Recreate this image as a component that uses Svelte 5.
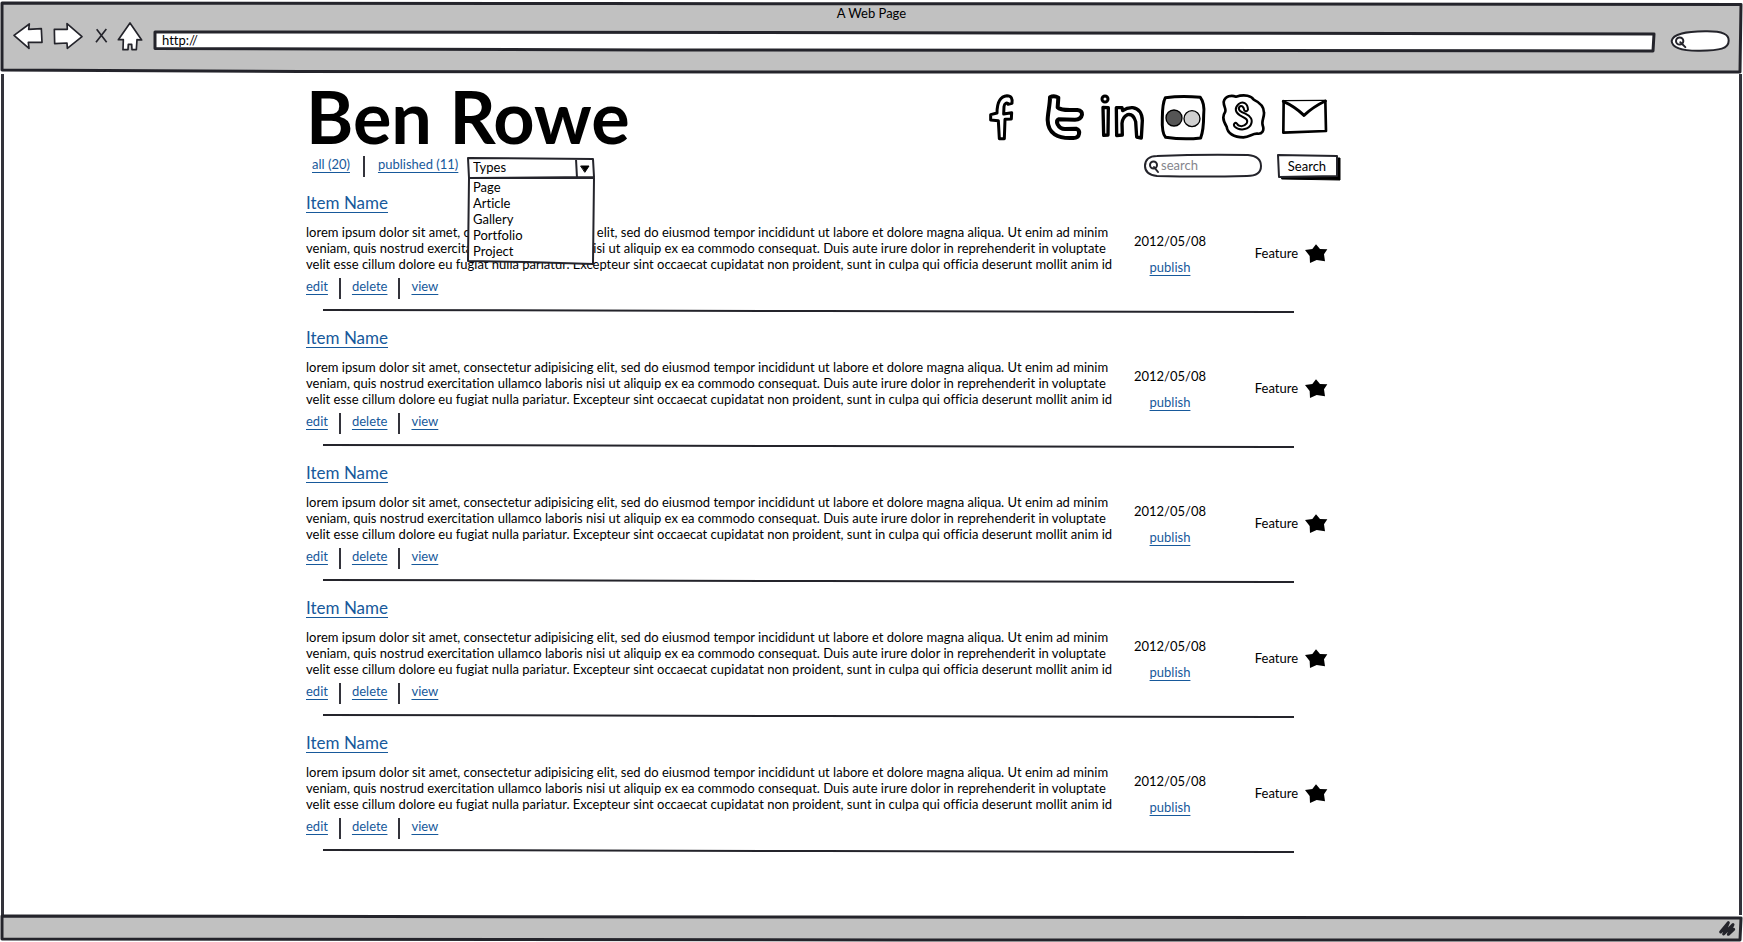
<script>
  const types = ['Page', 'Article', 'Gallery', 'Portfolio', 'Project'];
  const items = [1, 2, 3, 4, 5].map((id) => ({ id, name: 'Item Name', date: '2012/05/08' }));
  const lines = [
    'lorem ipsum dolor sit amet, consectetur adipisicing elit, sed do eiusmod tempor incididunt ut labore et dolore magna aliqua. Ut enim ad minim',
    'veniam, quis nostrud exercitation ullamco laboris nisi ut aliquip ex ea commodo consequat. Duis aute irure dolor in reprehenderit in voluptate',
    'velit esse cillum dolore eu fugiat nulla pariatur. Excepteur sint occaecat cupidatat non proident, sunt in culpa qui officia deserunt mollit anim id'
  ];
</script>

<div class="browser">
  <header class="chrome">
    <svg class="sketch" viewBox="0 0 1743 74" preserveAspectRatio="none" aria-hidden="true">
      <path class="bar" d="M2 3 L600 3.500 L1741 4.500 L1740 72 L900 72 L300 71.500 L2 70 Z" />
    </svg>
    <p class="window-title">A Web Page</p>
    <div class="tools">
      <button class="tool back" aria-label="Back">
        <svg viewBox="36 64 96 90" width="32" height="30"><path d="M42 107 L88 73 L86 89 L124 87 L126 128 L85 128 L87 146 Z" /></svg>
      </button>
      <button class="tool forward" aria-label="Forward">
        <svg viewBox="156 64 96 90" width="32" height="30"><path d="M163 89 L202 89 L201 72 L246 111 L202 146 L201 130 L164 132 Z" /></svg>
      </button>
      <button class="tool stop" aria-label="Stop">
        <svg viewBox="282 82 45 54" width="15" height="18"><path d="M290 89 L320 128 M319 88 L288 128" /></svg>
      </button>
      <button class="tool home" aria-label="Home">
        <svg viewBox="351 64 78 90" width="26" height="30"><path d="M390 70 L425 121 L411 120 L409 150 L396 150 L395 134 L385 134 L384 150 L369 150 L370 120 L355 120 Z" /></svg>
      </button>
      <div class="url">
        <svg class="sketch" viewBox="0 0 1503 22" preserveAspectRatio="none" aria-hidden="true">
          <path d="M2 2 L600 2.500 L1501 4 L1500 21 L500 20 L2 18.500 Z" />
        </svg>
        <input aria-label="Address" value="http://" />
      </div>
      <div class="pill">
        <svg class="sketch" viewBox="680 88 180 68" preserveAspectRatio="none" aria-hidden="true">
          <path d="M685 122 C688 98 730 93 785 92 C840 91 857 102 856 121 C856 146 830 151 770 152 C705 153 686 140 685 122 Z" />
          <circle cx="709" cy="122" r="11" /><path d="M711 126 L726 141" />
        </svg>
        <input aria-label="Web search" />
      </div>
    </div>
  </header>

  <main>
    <div class="page">
      <div class="masthead">
        <h1>Ben Rowe</h1>
        <div class="social">
          <a href="#facebook" aria-label="Facebook"><svg viewBox="54 36 132 150" width="44" height="50"><path d="M91 176 L88 122 L65 120 L65 104 L84 99 C84 68 92 49 114 47 C127 47 131 56 129 70 L117 73 C115 65 106 70 105 80 L104 102 L128 98 L127 117 L108 118 L106 176 Z" stroke-width="9" /></svg></a>
          <a href="#twitter" aria-label="Twitter"><svg viewBox="222 36 126 150" width="42" height="50"><path d="M240 52 Q252 45 265 53 L263 82 Q270 90 300 90 L322 90 Q337 92 336 104 Q333 119 315 119 L266 118 Q258 122 263 133 Q270 147 285 147 L318 146 Q330 150 327 162 Q325 174 310 174 C262 177 234 160 233 120 C233 100 240 75 240 52 Z" stroke-width="12" /></svg></a>
          <a href="#linkedin" aria-label="LinkedIn"><svg viewBox="393 36 141 150" width="47" height="50"><circle cx="411" cy="57" r="9" stroke-width="9" /><path d="M405 82 L421 83 L420 165 L407 166 Z M445 83 L462 83 L464 92 Q478 82 494 83 Q522 87 523 122 L520 174 L506 171 L503 125 Q496 100 478 104 Q463 112 462 130 L463 165 L446 167 Z" stroke-width="10" /></svg></a>
          <a href="#flickr" aria-label="Flickr"><svg viewBox="30 36 144 150" width="48" height="50"><path d="M49 53 Q100 46 154 52 Q168 70 164 105 Q164 150 155 174 Q105 180 50 172 Q38 160 40 115 Q40 70 49 53 Z" stroke-width="9" /><circle cx="75" cy="114" r="24" fill="#555" stroke-width="4" /><circle cx="129" cy="116" r="24" fill="#d0d0d0" stroke-width="4" /></svg></a>
          <a href="#skype" aria-label="Skype"><svg viewBox="210 36 141 150" width="47" height="50"><path d="M221 66 C225 47 245 45 258 50 C285 42 305 48 311 59 C326 66 342 78 342 98 C343 112 334 122 338 136 C344 152 336 163 322 161 C308 160 300 170 280 172 C252 172 232 160 230 140 C222 128 216 110 225 97 C230 88 221 80 221 66 Z" stroke-width="8" /><path d="M294 89 C293 69 278 63 266 72 C252 84 256 98 270 106 C282 113 297 117 290 130 C280 143 264 139 261 131 C256 126 248 131 254 140 C264 151 289 152 301 137 C311 120 302 108 286 101 C271 95 263 90 268 81 C274 74 281 80 283 91 Q290 98 294 89 Z" stroke-width="6" /></svg></a>
          <a href="#mail" aria-label="Email"><svg viewBox="390 36 147 150" width="49" height="50"><path d="M401 64 L526 63 L528 153 L400 158 Z" stroke-width="8" /><path d="M400 64 Q435 80 462 106 Q490 80 526 63" stroke-width="9" /></svg></a>
        </div>
      </div>

      <div class="toolbar">
        <nav aria-label="Filters">
          <a href="#all">all (20)</a>
          <i class="divider"></i>
          <a href="#published">published (11)</a>
        </nav>
        <div class="types">
          <svg class="sketch" viewBox="0 0 128 22" preserveAspectRatio="none" aria-hidden="true">
            <path d="M1 1 L126 2 L127 20 L2 21 Z M109 2 L110 21" />
            <path class="solid" d="M114 9 L122 9 L118 15 Z" />
          </svg>
          <select aria-label="Types">
            <option>Types</option>
            {#each types as type}<option>{type}</option>{/each}
          </select>
          <div class="menu">
            <svg class="sketch" viewBox="0 0 128 87" preserveAspectRatio="none" aria-hidden="true">
              <path d="M2 0 L1 83 L60 84 L126 86 L127 0 Z" />
            </svg>
            <ul>
              {#each types as type}<li><button>{type}</button></li>{/each}
            </ul>
          </div>
        </div>
        <form class="finder" onsubmit={(e) => e.preventDefault()}>
          <div class="field">
            <svg class="sketch" viewBox="0 0 120 24" preserveAspectRatio="none" aria-hidden="true">
              <path d="M14 2 Q60 0 105 1 C115 2 118 7 118 12 C118 19 112 22 104 22 Q60 23 14 22 C5 21 2 17 2 12 C2 6 6 2 14 2 Z" />
              <circle cx="10.500" cy="11" r="3.500" /><path d="M11 13 L15 18" />
            </svg>
            <input aria-label="Search" placeholder="search" />
          </div>
          <button class="go">
            <svg class="sketch" viewBox="0 0 64 27" preserveAspectRatio="none" aria-hidden="true">
              <path class="solid" d="M5 4 L63 4 L63 26 L5 25 Z" />
              <path d="M1 1 L60 2 L60 22 L2 23 Z" />
            </svg>
            <span>Search</span>
          </button>
        </form>
      </div>

      {#each items as item (item.id)}
        <article>
          <div class="body">
            <h2><a href="#item">{item.name}</a></h2>
            <p>{#each lines as line}<span>{line}</span>{/each}</p>
            <div class="actions">
              <a href="#edit">edit</a><i class="divider"></i><a href="#delete">delete</a><i class="divider"></i><a href="#view">view</a>
            </div>
          </div>
          <div class="status">
            <time datetime="2012-05-08">{item.date}</time>
            <a href="#publish">publish</a>
          </div>
          <button class="feature">
            Feature
            <svg viewBox="759 189 72 63" width="24" height="21" aria-hidden="true"><path d="M795 193 L807 207 L829 208 L819 223 L822 244 L797 240 L777 249 L776 228 L762 210 L784 207 Z" /></svg>
          </button>
          <svg class="rule" viewBox="0 0 972 4" preserveAspectRatio="none" aria-hidden="true"><path d="M0 1 L500 2 L972 3" /></svg>
        </article>
      {/each}
    </div>
  </main>

  <footer>
    <svg class="sketch" viewBox="0 0 1743 27" preserveAspectRatio="none" aria-hidden="true">
      <path class="bar" d="M2 1 L800 2 L1741 3 L1740 25 L900 25 L2 24 Z" />
    </svg>
    <svg class="grip" viewBox="525 60 54 51" width="18" height="17" aria-hidden="true"><path d="M533 96 L556 68 L542 102 L570 74 L556 103 L572 88" /></svg>
  </footer>
</div>

<style>
  :global(body) {
    background: #fff;
  }
  * {
    box-sizing: border-box;
  }
  .browser {
    min-height: 100vh;
    display: flex;
    flex-direction: column;
    font-family: Lato, sans-serif;
    font-size: 13px;
    line-height: 16px;
    font-variant-ligatures: none;
    color: #000;
  }
  h1, h2, p, ul {
    margin: 0;
    padding: 0;
  }
  button, input, select {
    font: inherit;
    color: inherit;
    background: none;
    border: 0;
    padding: 0;
    margin: 0;
    border-radius: 0;
    outline: none;
  }
  a {
    color: #17599b;
    text-decoration: underline;
    text-underline-offset: 3px;
    text-decoration-thickness: 1px;
    text-decoration-skip-ink: none;
  }
  .sketch {
    position: absolute;
    inset: 0;
    width: 100%;
    height: 100%;
    overflow: visible;
    pointer-events: none;
  }
  .sketch path, .sketch circle {
    fill: #fff;
    stroke: #24242b;
    stroke-width: 2;
    stroke-linejoin: round;
    stroke-linecap: round;
    vector-effect: non-scaling-stroke;
  }
  .sketch .bar {
    fill: #c1c1c1;
    stroke-width: 3;
  }
  .sketch .solid {
    fill: #000;
    stroke: #000;
    stroke-width: 1;
  }

  .chrome {
    position: relative;
    height: 74px;
    padding-top: 5px;
  }
  .window-title {
    position: relative;
    text-align: center;
  }
  .tools {
    position: relative;
    display: flex;
    align-items: flex-start;
    padding: 0 13px 0 12px;
  }
  .tool {
    height: 30px;
    display: flex;
    align-items: center;
  }
  .tool path {
    fill: #fff;
    stroke: #24242b;
    stroke-width: 5;
    stroke-linejoin: round;
  }
  .forward {
    margin-left: 8px;
  }
  .stop {
    margin-left: 10px;
  }
  .home {
    margin-left: 8px;
  }
  .url {
    position: relative;
    flex: 1;
    height: 22px;
    margin: 9px 14px 0 10px;
  }
  .url .sketch path {
    stroke-width: 3;
  }
  .url input {
    position: relative;
    display: block;
    width: 100%;
    height: 20px;
    padding-left: 9px;
  }
  .pill {
    position: relative;
    width: 60px;
    height: 22px;
    margin-top: 9px;
  }
  .pill input {
    position: relative;
    width: 100%;
    height: 22px;
    padding: 0 8px 0 18px;
  }

  main {
    flex: 1;
    border: solid #33333b;
    border-width: 0 3px;
    margin: 0 1px;
  }
  .page {
    max-width: 1131px;
    margin: 0 auto;
    padding-right: 96px;
  }
  .masthead {
    display: flex;
    justify-content: space-between;
    height: 78px;
    padding-top: 2px;
  }
  h1 {
    font-size: 72px;
    line-height: 80px;
    font-weight: 700;
  }
  .social {
    display: flex;
    gap: 13px;
    padding: 16px 12px 0 0;
  }
  .social a {
    display: flex;
    height: 50px;
  }
  .social svg {
    fill: #fff;
    stroke: #000;
    stroke-linejoin: round;
    stroke-linecap: round;
  }
  .toolbar {
    display: flex;
    align-items: flex-start;
    height: 41px;
    padding: 2px 0 0 6px;
  }
  nav {
    display: flex;
    gap: 13px;
    width: 155px;
    padding-top: 2px;
  }
  .divider {
    width: 2px;
    height: 21px;
    background: #33333b;
  }
  .types {
    position: relative;
    width: 128px;
    height: 22px;
    margin-top: 3px;
  }
  .types select {
    position: relative;
    display: block;
    appearance: none;
    width: 100%;
    height: 20px;
    padding-left: 6px;
  }
  .menu {
    position: absolute;
    z-index: 2;
    top: 21px;
    left: 0;
    width: 100%;
    height: 87px;
    padding: 1px 6px;
  }
  .menu ul {
    position: relative;
    list-style: none;
  }
  .menu li {
    height: 16px;
  }
  .menu button {
    display: block;
    width: 100%;
    text-align: left;
  }
  .finder {
    display: flex;
    gap: 14px;
    margin-left: auto;
  }
  .field {
    position: relative;
    width: 120px;
    height: 24px;
  }
  .field input {
    position: relative;
    width: 100%;
    height: 22px;
    padding: 0 10px 0 18px;
  }
  .field input::placeholder {
    color: #85858c;
    opacity: 1;
  }
  .go {
    position: relative;
    width: 64px;
    height: 27px;
  }
  .go span {
    position: relative;
    display: block;
    padding: 0 4px 4px 0;
  }

  article {
    display: grid;
    grid-template-columns: minmax(0, 1fr) 146px 98px;
    align-content: start;
    align-items: start;
    height: 135px;
  }
  h2 {
    font-size: 17px;
    line-height: 20px;
    font-weight: 400;
  }
  .body p {
    padding-top: 11px;
  }
  .body p span {
    display: block;
    white-space: nowrap;
  }
  .actions {
    display: flex;
    gap: 11px;
    padding-top: 6px;
  }
  .status {
    display: flex;
    flex-direction: column;
    align-items: center;
    gap: 10px;
    padding-top: 40px;
  }
  .feature {
    display: flex;
    align-items: center;
    justify-content: flex-end;
    gap: 6px;
    height: 24px;
    margin-top: 48px;
    padding-right: 13px;
  }
  .rule {
    grid-column: 1 / -1;
    width: calc(100% - 64px);
    height: 4px;
    margin: 10px 0 0 17px;
    overflow: visible;
  }
  .rule path {
    fill: none;
    stroke: #24242b;
    stroke-width: 2;
    vector-effect: non-scaling-stroke;
  }

  footer {
    position: relative;
    height: 27px;
    display: flex;
    justify-content: flex-end;
    align-items: center;
    padding-right: 7px;
  }
  .grip {
    position: relative;
    fill: none;
    stroke: #24242b;
    stroke-width: 9;
    stroke-linecap: round;
    stroke-linejoin: round;
  }
</style>
